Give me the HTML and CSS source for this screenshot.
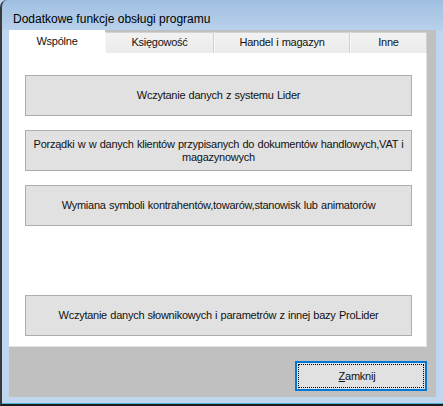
FILE: index.html
```html
<!doctype html>
<html lang="pl">
	<head>
		<meta charset="UTF-8" />
		<title>Dodatkowe funkcje obsługi programu</title>
		<link rel="stylesheet" href="styles.css">
	</head>
	<body>
		<div class="window">
			<div class="title">Dodatkowe funkcje obsługi programu</div>
			<div class="client">
				<div class="tabs">
					<div class="tab tab-wspolne active">Wspólne</div>
					<div class="tab tab-ksiegowosc">Księgowość</div>
					<div class="tab tab-handel">Handel i magazyn</div>
					<div class="tab tab-inne">Inne</div>
				</div>
				<div class="panel">
					<button class="action">Wczytanie danych z systemu Lider</button>
					<button class="action">Porządki w w danych klientów przypisanych do dokumentów handlowych,VAT i magazynowych</button>
					<button class="action">Wymiana symboli kontrahentów,towarów,stanowisk lub animatorów</button>
					<button class="action action-last">Wczytanie danych słownikowych i parametrów z innej bazy ProLider</button>
				</div>
				<div class="footer">
					<button class="close"><u>Z</u>amknij</button>
				</div>
			</div>
		</div>
	</body>
</html>
```
FILE: styles.css
```css
body {
	margin: 0;
	font-family: "Liberation Sans", Arial, sans-serif;
	color: #000;
	background-color: #bfd6ee;
}
.window {
	width: 443px;
	height: 406px;
	box-sizing: border-box;
	display: flex;
	flex-direction: column;
	padding-bottom: 7px;
	border-left: 2px solid #3a3a3a;
	border-bottom: 2px solid #1c1c1c;
	border-top-left-radius: 7px;
	background: linear-gradient(#9fbfe1 0, #b9d1eb 30px, #bfd6ee 31px);
	box-shadow: inset 0 -1px 0 #4fb4da;
}
.title {
	height: 30px;
	box-sizing: border-box;
	padding: 12px 0 0 11px;
	font-size: 12px;
	line-height: 14px;
}
.client {
	flex: 1;
	margin: 0 7px;
	display: flex;
	flex-direction: column;
	background-color: #c0c0c0;
	font-size: 11px;
	letter-spacing: -0.25px;
	word-spacing: 0.5px;
	color: #111;
}
.tabs {
	display: flex;
	align-items: flex-end;
	height: 23px;
}
.tab {
	height: 21px;
	box-sizing: border-box;
	border: 1px solid #d2d2d2;
	border-bottom: none;
	background: linear-gradient(#f2f2f2, #ebebeb);
	line-height: 19px;
	text-align: center;
}
.tab + .tab {
	border-left-color: #f8f8f8;
}
.tab.active {
	height: 23px;
	padding-top: 1px;
	background: #fff;
	border-color: #fff;
}
.tab-wspolne {
	width: 96px;
}
.tab-ksiegowosc {
	width: 109px;
}
.tab-handel {
	width: 136px;
}
.tab-inne {
	width: 77px;
}
.panel {
	width: 418px;
	height: 294px;
	box-sizing: border-box;
	display: flex;
	flex-direction: column;
	gap: 14px;
	padding: 22px 14px 10px 16px;
	background-color: #fff;
	border-right: 1px solid #e3e3e3;
	border-bottom: 1px solid #e3e3e3;
}
.action {
	height: 41px;
	flex: none;
	padding: 0 2px;
	border: 1px solid #adadad;
	background-color: #e1e1e1;
	font: inherit;
	letter-spacing: inherit;
	word-spacing: inherit;
	line-height: 13px;
	color: inherit;
}
.action-last {
	margin-top: auto;
}
.footer {
	display: flex;
	justify-content: flex-end;
	padding: 14px 9px 6px 0;
}
.close {
	width: 132px;
	height: 30px;
	border: 2px solid #0078d7;
	background-color: #e1e1e1;
	outline: 1px dotted #000;
	outline-offset: -4px;
	font: inherit;
	letter-spacing: inherit;
	color: inherit;
	padding: 0 8px 0 0;
}
```
